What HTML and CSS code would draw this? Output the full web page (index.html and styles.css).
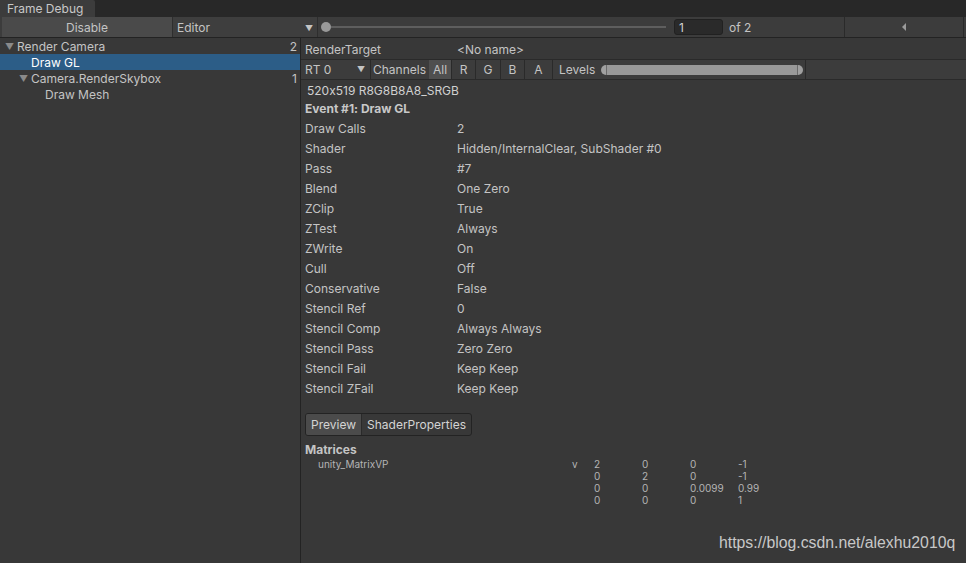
FILE: index.html
```html
<!DOCTYPE html>
<html>
<head>
<meta charset="utf-8">
<link rel="stylesheet" href="styles.css">
</head>
<body>
<div class="window">
  <div class="tabstrip"><div class="tab">Frame Debug</div></div>
  <div class="toolbar">
    <div class="btn-disable">Disable</div>
    <div class="dropdown-editor"><span>Editor</span><span class="arrow">&#9660;</span></div>
    <div class="slider">
      <div class="knob"></div>
      <div class="track"></div>
    </div>
    <div class="numfield">1</div>
    <div class="of">of 2</div>
    <div class="spacer"></div>
    <div class="navbtn"><svg width="6" height="10" viewBox="0 0 6 10"><path d="M5 1 L1 5 L5 9 Z" fill="#9a9a9a"/></svg></div>
    <div class="navbtn-tail"></div>
  </div>
  <div class="main">
    <div class="tree">
      <div class="row lvl0"><span class="tri">&#9660;</span><span class="name">Render Camera</span><span class="count">2</span></div>
      <div class="row lvl1 selected"><span class="name">Draw GL</span></div>
      <div class="row lvl1"><span class="tri">&#9660;</span><span class="name">Camera.RenderSkybox</span><span class="count">1</span></div>
      <div class="row lvl2"><span class="name">Draw Mesh</span></div>
    </div>
    <div class="details">
      <div class="rt-row"><span class="k">RenderTarget</span><span class="v">&lt;No name&gt;</span></div>
      <div class="chanbar">
        <div class="rtdrop"><span>RT 0</span><span class="arrow">&#9660;</span></div>
        <div class="chanlabel">Channels</div>
        <div class="cbtn active">All</div>
        <div class="cbtn r">R</div>
        <div class="cbtn g">G</div>
        <div class="cbtn b">B</div>
        <div class="cbtn a">A</div>
        <div class="levels">
          <span>Levels</span>
          <div class="lvslider"><div class="cap l"></div><div class="fill"></div><div class="cap r"></div></div>
        </div>
      </div>
      <div class="props">
        <div class="format">520x519 R8G8B8A8_SRGB</div>
        <div class="event">Event #1: Draw GL</div>
        <div class="prop"><span class="k">Draw Calls</span><span class="v">2</span></div>
        <div class="prop"><span class="k">Shader</span><span class="v">Hidden/InternalClear, SubShader #0</span></div>
        <div class="prop"><span class="k">Pass</span><span class="v">#7</span></div>
        <div class="prop"><span class="k">Blend</span><span class="v">One Zero</span></div>
        <div class="prop"><span class="k">ZClip</span><span class="v">True</span></div>
        <div class="prop"><span class="k">ZTest</span><span class="v">Always</span></div>
        <div class="prop"><span class="k">ZWrite</span><span class="v">On</span></div>
        <div class="prop"><span class="k">Cull</span><span class="v">Off</span></div>
        <div class="prop"><span class="k">Conservative</span><span class="v">False</span></div>
        <div class="prop"><span class="k">Stencil Ref</span><span class="v">0</span></div>
        <div class="prop"><span class="k">Stencil Comp</span><span class="v">Always Always</span></div>
        <div class="prop"><span class="k">Stencil Pass</span><span class="v">Zero Zero</span></div>
        <div class="prop"><span class="k">Stencil Fail</span><span class="v">Keep Keep</span></div>
        <div class="prop"><span class="k">Stencil ZFail</span><span class="v">Keep Keep</span></div>
        <div class="tabs"><div class="ttab on">Preview</div><div class="ttab">ShaderProperties</div></div>
        <div class="mat-title">Matrices</div>
        <div class="matrix">
          <span class="mname">unity_MatrixVP</span><span class="mv">v</span><span>2</span><span>0</span><span>0</span><span>-1</span>
          <span></span><span></span><span>0</span><span>2</span><span>0</span><span>-1</span>
          <span></span><span></span><span>0</span><span>0</span><span>0.0099</span><span>0.99</span>
          <span></span><span></span><span>0</span><span>0</span><span>0</span><span>1</span>
        </div>
      </div>
    </div>
  </div>
  <div class="watermark">https://blog.csdn.net/alexhu2010q</div>
</div>
</body>
</html>
```

FILE: styles.css
```css
html, body {
  margin: 0;
  padding: 0;
  background: #383838;
}
body {
  font-family: Inter, "Noto Sans", sans-serif;
  font-size: 12px;
  font-feature-settings: "calt" 0;
  color: #c4c4c4;
  width: 966px;
  height: 563px;
  overflow: hidden;
}
.window {
  position: relative;
  width: 966px;
  height: 563px;
  display: flex;
  flex-direction: column;
}
.tabstrip {
  height: 17px;
  background: #282828;
  display: flex;
}
.tab {
  width: 95px;
  background: #3c3c3c;
  padding-left: 7px;
  box-sizing: border-box;
  line-height: 17px;
  color: #c8c8c8;
  border-top-right-radius: 2px;
}
.toolbar {
  height: 21px;
  background: #3c3c3c;
  border-bottom: 1px solid #232323;
  box-sizing: border-box;
  display: flex;
  align-items: stretch;
}
.btn-disable {
  margin-left: 2px;
  width: 171px;
  background: #4a4a4a;
  text-align: center;
  padding-top: 1px;
  line-height: 19px;
  border-right: 1px solid #2e2e2e;
  box-sizing: border-box;
}
.dropdown-editor {
  width: 145px;
  background: #3e3e3e;
  display: flex;
  justify-content: space-between;
  align-items: center;
  padding: 1px 4px 0 4px;
  box-sizing: border-box;
  border-right: 1px solid #2e2e2e;
}
.arrow {
  font-size: 8px;
  color: #c4c4c4;
}
.slider {
  width: 350px;
  display: flex;
  align-items: center;
  padding-left: 3px;
  box-sizing: border-box;
}
.knob {
  width: 10px;
  height: 10px;
  border-radius: 50%;
  background: #999999;
  flex: none;
}
.track {
  height: 2px;
  background: #5e5e5e;
  flex: 1;
  margin-right: 2px;
}
.numfield {
  align-self: center;
  width: 49px;
  height: 16px;
  box-sizing: border-box;
  background: #2a2a2a;
  border: 1px solid #212121;
  border-radius: 3px;
  line-height: 15px;
  padding-left: 4px;
  color: #d2d2d2;
  margin-left: 6px;
}
.of {
  padding-top: 1px;
  line-height: 19px;
  margin-left: 6px;
  color: #c4c4c4;
}
.spacer {
  flex: 1;
  border-right: 1px solid #2a2a2a;
}
.navbtn {
  width: 118px;
  display: flex;
  align-items: center;
  justify-content: center;
  border-right: 1px solid #2a2a2a;
}
.navbtn-tail {
  width: 2px;
}
.main {
  flex: 1;
  display: flex;
  min-height: 0;
}
.tree {
  width: 300px;
  border-right: 1px solid #232323;
  background: #383838;
  flex: none;
}
.row {
  height: 16px;
  box-sizing: border-box;
  padding-top: 2px;
  line-height: 14px;
  display: flex;
  white-space: nowrap;
}
.row.selected {
  background: #2c5d87;
  color: #ffffff;
}
.tri {
  font-size: 9px;
  color: #8a8a8a;
  width: 12px;
  display: inline-block;
}
.lvl0 { padding-left: 5px; }
.lvl1 { padding-left: 31px; }
.lvl1 .tri { margin-left: -12px; }
.lvl2 { padding-left: 45px; }
.count {
  margin-left: auto;
  padding-right: 3px;
}
.details {
  flex: 1;
  display: flex;
  flex-direction: column;
}
.rt-row {
  height: 21px;
  box-sizing: border-box;
  padding-top: 2px;
  line-height: 19px;
  display: flex;
  padding-left: 4px;
}
.rt-row .k { width: 152px; }
.chanbar {
  height: 21px;
  background: #3c3c3c;
  border-top: 1px solid #2a2a2a;
  border-bottom: 1px solid #2a2a2a;
  box-sizing: border-box;
  display: flex;
  align-items: stretch;
  line-height: 19px;
}
.rtdrop {
  width: 70px;
  display: flex;
  justify-content: space-between;
  align-items: center;
  padding: 0 5px 0 4px;
  box-sizing: border-box;
  border-right: 1px solid #2a2a2a;
}
.chanlabel {
  padding-left: 2px;
  width: 58px;
  box-sizing: border-box;
}
.cbtn {
  width: 24px;
  text-align: center;
  border-right: 1px solid #2a2a2a;
  box-sizing: border-box;
}
.cbtn.active {
  background: #4f4f4f;
  width: 23px;
}
.cbtn.g { width: 25px; }
.cbtn.b { width: 24px; }
.cbtn.a { width: 28px; }
.levels {
  width: 253px;
  display: flex;
  align-items: center;
  padding-left: 6px;
  box-sizing: border-box;
  border-right: 1px solid #2a2a2a;
}
.lvslider {
  margin-left: 6px;
  width: 202px;
  height: 10px;
  display: flex;
}
.cap {
  width: 5px;
  height: 10px;
  background: #a0a0a0;
}
.cap.l { border-radius: 5px 0 0 5px; border-right: 1px solid #6a6a6a; }
.cap.r { border-radius: 0 5px 5px 0; border-left: 1px solid #6a6a6a; }
.fill {
  flex: 1;
  background: #999999;
}
.props {
  padding-left: 4px;
  padding-top: 3px;
}
.format {
  line-height: 16px;
  padding-left: 2px;
  color: #d0d0d0;
}
.event {
  line-height: 20px;
  font-weight: bold;
  color: #c8c8c8;
}
.prop {
  display: flex;
  line-height: 20px;
}
.prop .k { width: 152px; }
.tabs {
  margin-top: 14px;
  display: inline-flex;
  height: 23px;
  border: 1px solid #232323;
  border-radius: 3px;
  overflow: hidden;
  box-sizing: border-box;
}
.ttab {
  line-height: 21px;
  padding: 0 5px;
  color: #d4d4d4;
}
.ttab.on {
  background: #4b4b4b;
  border-right: 1px solid #2a2a2a;
}
.mat-title {
  margin-top: 6px;
  line-height: 16px;
  font-weight: bold;
}
.matrix {
  display: grid;
  grid-template-columns: 254px 22px 48px 48px 48px 40px;
  padding-left: 13px;
  font-size: 10px;
  line-height: 12px;
  color: #b4b4b4;
}
.watermark {
  position: absolute;
  left: 719px;
  top: 534px;
  font-family: "Liberation Sans", Arial, sans-serif;
  font-size: 15.8px;
  color: #c8c8c8;
}
```
